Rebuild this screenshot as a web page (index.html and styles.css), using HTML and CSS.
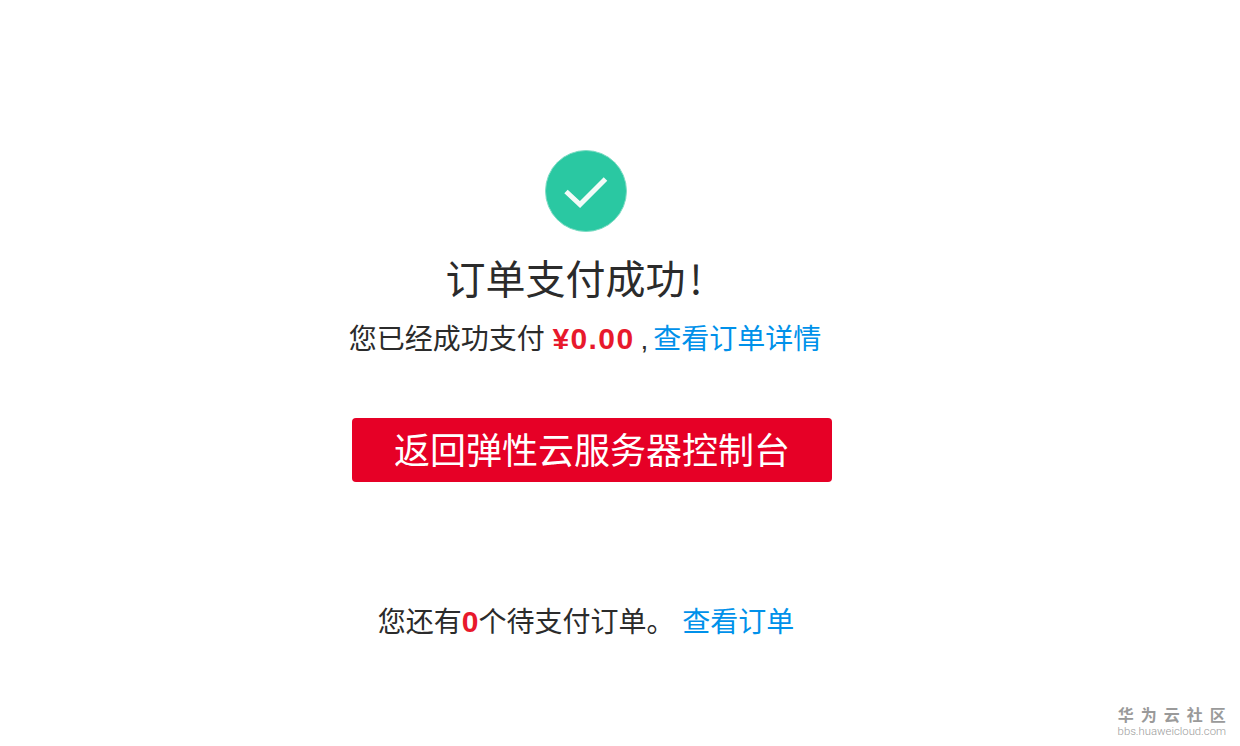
FILE: index.html
```html
<!DOCTYPE html>
<html lang="zh-CN">
<head>
<meta charset="utf-8">
<title>订单支付成功</title>
<link rel="stylesheet" href="styles.css">
</head>
<body>
<main class="result">
  <svg class="check" viewBox="0 0 82 82" width="82" height="82" aria-hidden="true">
    <circle cx="41" cy="41" r="40.500" fill="#2ac8a2" stroke="#7fdcc4" stroke-width="1"/>
    <path d="M21 41.500 L35 54.500 L60.500 29" fill="none" stroke="#f2fbf8" stroke-width="5"/>
  </svg>
  <h1 class="title">订单支付成功<span class="bang">!</span></h1>
  <p class="summary">您已经成功支付 <strong class="amount">¥0.00</strong><span class="comma">,</span><a class="link" href="#">查看订单详情</a></p>
  <a class="back" href="#">返回弹性云服务器控制台</a>
  <p class="pending">您还有<strong class="count">0</strong>个待支付订单。 <a class="link" href="#">查看订单</a></p>
</main>
<div class="mark">
  <div class="mark-cn">华为云社区</div>
  <div class="mark-en">bbs.huaweicloud.com</div>
</div>
</body>
</html>
```
FILE: styles.css
```css
* { box-sizing: border-box; }
html, body { margin: 0; height: 100%; }
body {
  background: #fff;
  color: #2b2b2b;
  font-family: "Liberation Sans", "Noto Sans CJK SC", sans-serif;
  overflow: hidden;
}
.result {
  width: 1172px;
  padding-top: 150px;
  display: flex;
  flex-direction: column;
  align-items: center;
}
.check { display: block; }
.title {
  margin: 19px 24px 0 0;
  font-size: 40px;
  line-height: 52px;
  font-weight: 400;
}
.bang {
  margin-left: 4px;
  font-family: "Noto Sans CJK SC", sans-serif;
}
.summary {
  margin: 13px 2px 0 0;
  font-size: 28px;
  line-height: 40px;
  white-space: nowrap;
}
.amount { color: #e8192c; font-size: 30px; font-weight: 700; letter-spacing: 1.4px; }
.comma { margin: 0 5px 0 6px; }
.link { color: #0091ea; text-decoration: none; }
.back {
  margin: 58px 0 0 12px;
  width: 480px;
  height: 64px;
  border-radius: 4px;
  background: #e60026;
  color: #fff;
  font-size: 36px;
  line-height: 68px;
  text-align: center;
  text-decoration: none;
}
.pending {
  margin: 120px 0 0;
  font-size: 28px;
  line-height: 40px;
  white-space: nowrap;
}
.count { color: #e8192c; font-size: 30px; font-weight: 700; }
.mark {
  position: absolute;
  right: 14px;
  bottom: 9px;
  text-align: center;
  color: #9a9a9a;
}
.mark-cn { font-size: 16px; line-height: 20px; font-weight: 700; letter-spacing: 7px; margin-right: -7px; }
.mark-en { font-family: Roboto, sans-serif; font-size: 11.3px; font-weight: 300; line-height: 11px; color: #9a9a9a; }
```
